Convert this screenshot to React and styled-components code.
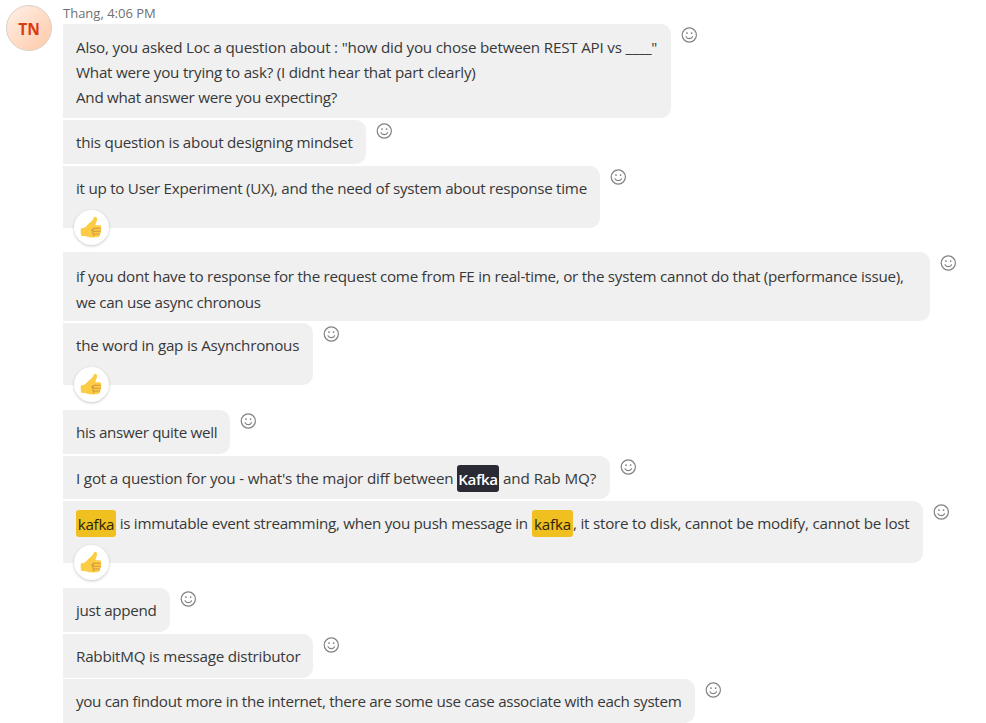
import React from "react";
import styled, { createGlobalStyle } from "styled-components";

const GlobalStyle = createGlobalStyle`
  body { margin: 0; background: #fff; overflow: hidden; }
  * { box-sizing: border-box; }
`;
const Chat = styled.main`
  display: flex;
  width: 986px;
  height: 723px;
  overflow: hidden;
  background: #fff;
  font-family: "Open Sans", "Noto Sans", sans-serif;
  color: #383838;
`;
const Avatar = styled.div`
  flex: none;
  display: flex;
  align-items: center;
  justify-content: center;
  width: 46px;
  height: 46px;
  margin: 5px 11px 0 6px;
  padding-top: 2px;
  border: 1px solid #dccfc8;
  border-radius: 50%;
  background: linear-gradient(135deg, #fff0e6, #ffc9a8);
  color: #d83b10;
  font-size: 15.5px;
  font-weight: 700;
`;
const Thread = styled.section`
  flex: 1;
`;
const Meta = styled.header`
  height: 24px;
  padding-top: 3px;
  font-size: 13px;
  line-height: 20px;
  color: #707070;
  white-space: nowrap;
`;
const Row = styled.div`
  display: flex;
  align-items: flex-start;
  height: ${(p) => p.$h}px;
`;
const Bubble = styled.article`
  position: relative;
  flex: none;
  width: ${(p) => p.$w}px;
  height: ${(p) => p.$h}px;
  padding: ${(p) => p.$pad}px 0 0 13px;
  border-radius: 0 10px 10px 0;
  background: #f0f0f0;
`;
const Line = styled.p`
  display: flex;
  align-items: center;
  margin: 0;
  height: ${(p) => p.$lh || 25}px;
  font-size: 15.2px;
  line-height: 25px;
  white-space: pre;
`;
const Run = styled.span`
  flex: none;
  width: ${(p) => p.$w}px;
  letter-spacing: ${(p) => p.$ls || 0}px;
`;
const Mark = styled.mark`
  flex: none;
  width: ${(p) => p.$w}px;
  height: 27px;
  line-height: 28px;
  text-align: center;
  border-radius: 3px;
  letter-spacing: ${(p) => p.$ls || 0}px;
  background: ${(p) => (p.$dark ? "#292a33" : "#f0c020")};
  color: ${(p) => (p.$dark ? "#fff" : "#2c2508")};
  font-weight: ${(p) => (p.$dark ? 600 : 400)};
`;
const Reaction = styled.span`
  position: absolute;
  left: 11px;
  bottom: -17px;
  z-index: 1;
  display: flex;
  align-items: center;
  justify-content: center;
  width: 35px;
  height: 35px;
  padding-right: 1px;
  border-radius: 50%;
  background: #fff;
  box-shadow: 0 1px 3px rgba(0, 0, 0, 0.22);
`;
const SmileIcon = styled.svg`
  flex: none;
  width: 16px;
  height: 16px;
  margin: 3px 0 0 10px;
`;

const Smile = () => (
  <SmileIcon viewBox="0 0 16 16" fill="none" stroke="#808285" strokeLinecap="round">
    <circle cx="8.3" cy="8" r="7.1" strokeWidth="1.2" />
    <path d="M5 9.7c1.500 2.600 5.100 2.600 6.600 0" strokeWidth="1.1" />
    <circle cx="6" cy="6.1" r=".9" fill="#808285" stroke="none" />
    <circle cx="10.6" cy="6.1" r=".9" fill="#808285" stroke="none" />
  </SmileIcon>
);

const Thumb = () => (
  <svg width="22" height="23" viewBox="0 0 22 23">
    <path
      d="M1 12.2c2.7.2 4.5-.8 6.2-3C9 6.900 11.900 5.600 13.600 2.500c.4-.9.6-1.600 1.500-1.700 1.500-.1 2.200 1.400 1.900 3-.3 1.900-1.400 3.800-1.700 5.400h4c1.700 0 2.400 1.700 1.500 2.900.9 1 .8 2.300-.1 3 .6 1.100.2 2.300-.7 2.900.4 1.500-.5 2.700-2.100 2.900-3.800.7-8 .8-11.200-.5-1.700-.7-3-.5-5.200-.4C.6 17.700.4 14.700 1 12.200z"
      fill="#fdcc45"
    />
    <path
      d="M11.500 14.200c1-.4 1.400-1.500 2.500-1.900h6.300M13.200 15.300h7.200M13.300 18h6.200M13.200 12.800c-.6 2.300-.4 5 .8 7.200"
      fill="none"
      stroke="#cf9440"
      strokeWidth="1.050"
      strokeLinecap="round"
    />
  </svg>
);

const messages = [
  {
    w: 608, h: 94, row: 96, pad: 11,
    lines: [
      [{ t: 'Also, you asked Loc a question about : "how did you chose between REST API vs ____"', ls: -0.195 }],
      [{ t: "What were you trying to ask? (I didnt hear that part clearly)", ls: -0.23 }],
      [{ t: "And what answer were you expecting?", ls: -0.27 }],
    ],
  },
  { w: 303, h: 44, row: 46, pad: 10, lines: [[{ t: "this question is about designing mindset", ls: -0.23 }]] },
  { w: 537, h: 62, row: 86, pad: 10, like: true, lines: [[{ t: "it up to User Experiment (UX), and the need of system about response time", ls: -0.265 }]] },
  {
    w: 867, h: 69, row: 71, pad: 11, lh: 26,
    lines: [
      [{ t: "if you dont have to response for the request come from FE in real-time, or the system cannot do that (performance issue),", ls: -0.263 }],
      [{ t: "we can use async chronous", ls: -0.33 }],
    ],
  },
  { w: 250, h: 62, row: 87, pad: 10, like: true, lines: [[{ t: "the word in gap is Asynchronous", ls: -0.23 }]] },
  { w: 167, h: 44, row: 46, pad: 10, lines: [[{ t: "his answer quite well", ls: -0.33 }]] },
  {
    w: 547, h: 43, row: 45, pad: 10,
    lines: [[
      { t: "I got a question for you - what's the major diff between", w: 381, ls: -0.18 },
      { t: "Kafka", w: 42, mark: true, dark: true, ls: -0.4 },
      { t: " and Rab MQ?", ls: -0.06 },
    ]],
  },
  {
    w: 860, h: 62, row: 87, pad: 10, like: true,
    lines: [[
      { t: "kafka", w: 40, mark: true, ls: -0.3 },
      { t: " is immutable event streamming, when you push message in", w: 416, ls: -0.28 },
      { t: "kafka", w: 41, mark: true, ls: -0.2 },
      { t: ", it store to disk, cannot be modify, cannot be lost", ls: -0.22 },
    ]],
  },
  { w: 107, h: 44, row: 46, pad: 10, lines: [[{ t: "just append", ls: -0.32 }]] },
  { w: 250, h: 44, row: 45, pad: 10, lines: [[{ t: "RabbitMQ is message distributor", ls: -0.23 }]] },
  { w: 632, h: 44, row: 44, pad: 10, lines: [[{ t: "you can findout more in the internet, there are some use case associate with each system", ls: -0.31 }]] },
];

const Message = ({ m }) => (
  <Row $h={m.row}>
    <Bubble $w={m.w} $h={m.h} $pad={m.pad}>
      {m.lines.map((runs, i) => (
        <Line key={i} $lh={m.lh}>
          {runs.map((r, j) =>
            r.mark ? (
              <Mark key={j} $w={r.w} $dark={r.dark} $ls={r.ls}>{r.t}</Mark>
            ) : (
              <Run key={j} $w={r.w} $ls={r.ls}>{r.t}</Run>
            )
          )}
        </Line>
      ))}
      {m.like && <Reaction><Thumb /></Reaction>}
    </Bubble>
    <Smile />
  </Row>
);

export default function App() {
  return (
    <>
      <GlobalStyle />
      <Chat>
        <Avatar>TN</Avatar>
        <Thread>
          <Meta>Thang, 4:06 PM</Meta>
          {messages.map((m, i) => <Message key={i} m={m} />)}
        </Thread>
      </Chat>
    </>
  );
}
